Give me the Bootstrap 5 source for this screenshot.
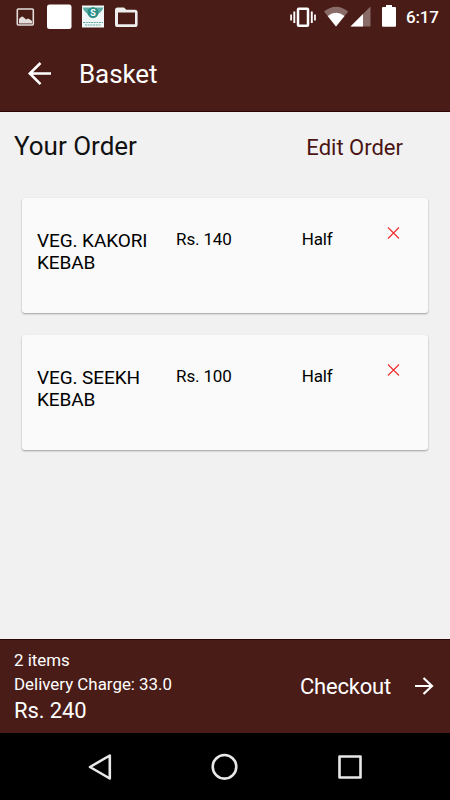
<!DOCTYPE html>
<html lang="en">
<head>
<meta charset="utf-8">
<meta name="viewport" content="width=device-width, initial-scale=1">
<title>Basket</title>
<link href="https://cdn.jsdelivr.net/npm/bootstrap@5.3.0/dist/css/bootstrap.min.css" rel="stylesheet">
<style>
  body { font-family: Roboto, "Liberation Sans", sans-serif; background: #f1f1f1; color: #111; }
  svg { display: block; flex: none; }
  .app { height: 800px; width: 450px; }
  .maroon { background: #4a1c17; color: #fff; }
  .status { height: 36px; }
  .clock { font-size: 17px; line-height: 18px; font-weight: 500; width: 34px; margin: 0 10px 0 9px; letter-spacing: -.2px; }
  .appbar { height: 76px; padding: 1px 0 0 22px; border-bottom: 1px solid #2c0505; }
  .appbar h1 { font-size: 26px; line-height: 32px; font-weight: 400; margin-left: 22px; letter-spacing: -.1px; }
  .heading { height: 86px; padding: 18px 47px 0 14px; }
  .heading h2 { font-size: 26px; line-height: 32px; font-weight: 400; }
  .edit { font-size: 22px; line-height: 36px; color: #4a1513; }
  .order { height: 115px; margin: 0 22px 22px; padding: 29px 27px 0 15px; background: #fafafa; border: 0; border-radius: 3px; box-shadow: 0 1px 2px rgba(0,0,0,.34); color: #000; }
  .dish { font-size: 19px; line-height: 22px; width: 139.500px; padding-top: 3px; letter-spacing: -.1px; }
  .cell { font-size: 17px; line-height: 25px; letter-spacing: -.15px; }
  .price { width: 126px; }
  .size { width: 83.500px; }
  .total { height: 94px; padding: 0 16px 0 14px; border-top: 1px solid #2c0505; }
  .sm-line { font-size: 16.9px; line-height: 24px; }
  .sm-line:first-child { margin-top: -1px; }
  .sum { font-size: 22px; line-height: 29px; letter-spacing: -.1px; }
  .go { font-size: 22px; line-height: 28px; letter-spacing: -.2px; }
  .keys { height: 67px; }
</style>
</head>
<body>
<div class="app d-flex flex-column overflow-hidden">
  <div class="status maroon d-flex flex-shrink-0">
    <svg width="142" height="36" viewBox="0 0 142 36">
      <g opacity=".85">
        <rect x="17.300" y="9" width="16" height="16" rx="1" fill="none" stroke="#fff" stroke-width="1.600"/>
        <path d="M19 23.500V19l2-2 1.500-.5 2 1.500 1.500 1.500 2-1 2 1 2 1.500v2.500z" fill="#fff"/>
      </g>
      <rect x="47" y="4.500" width="24.500" height="24.500" rx="2.500" fill="#fff"/>
      <rect x="82" y="5.500" width="22" height="22" fill="#f2f8f7"/>
      <path d="M82.500 7.500h7l3.500 1 3.500-1h7l-1.500 3-3 3-3 2.500-3 2.500-3-2.500-3-2.500-3-3z" fill="#5cada7"/>
      <circle cx="93" cy="12.500" r="5.500" fill="#2b8f87"/>
      <text x="93" y="15.800" font-size="9" font-weight="700" text-anchor="middle" fill="#fff">S</text>
      <path d="M83 22.500h20M85 25h16" stroke="#63aaa4" stroke-width="1.200" stroke-dasharray="2 .7"/>
      <path d="M115 10.200q0-2.700 2.600-2.700h6.400l2.300 2.300h8.700q2.600 0 2.600 2.600v12q0 2.600-2.600 2.600h-17.400q-2.600 0-2.600-2.600zM118 12.600v11.600h17V12.600z" fill="#eee" fill-rule="evenodd"/>
    </svg>
    <svg class="ms-auto" width="112" height="36" viewBox="285 0 112 36">
      <g fill="none" stroke="#fff">
        <rect x="298" y="8.700" width="10" height="17" rx=".8" stroke-width="2.500"/>
        <path d="M294.300 11.500v11.500M311.800 11.500v11.500" stroke-width="1.900"/>
        <path d="M291.100 14.500v6M315 14.500v6" stroke-width="1.700"/>
      </g>
      <path d="M324 11.500Q336 2 348.200 11.500L336 26.500z" fill="#fff" opacity=".35"/>
      <path d="M327.700 16.100Q336 9.300 344.500 16.100L336 26.500z" fill="#fff"/>
      <path d="M370.500 6.500V26.500h-20z" fill="#fff" opacity=".35"/>
      <path d="M363 14V26.500h-12.500z" fill="#fff"/>
      <path d="M386 5h6v2h3q1 0 1 1v17.700q0 1-1 1h-12q-1 0-1-1V8q0-1 1-1h3z" fill="#fff"/>
    </svg>
    <span class="clock text-nowrap pt-2">6:17</span>
  </div>

  <header class="appbar maroon d-flex align-items-center flex-shrink-0">
    <svg width="35" height="34" viewBox="22 56 35 34" fill="none" stroke="#fff" stroke-width="2.600"><path d="M51 72.500H30M40.500 62 29.800 72.500l10.700 10.700"/></svg>
    <h1 class="mb-0">Basket</h1>
  </header>

  <main class="flex-grow-1">
    <div class="heading d-flex justify-content-between align-items-start">
      <h2 class="mb-0">Your Order</h2>
      <a href="#" class="edit text-decoration-none">Edit Order</a>
    </div>
    <div class="order card flex-row align-items-start">
      <div class="dish">VEG. KAKORI KEBAB</div>
      <div class="cell price">Rs. 140</div>
      <div class="cell size">Half</div>
      <svg width="16" height="12" viewBox="0 0 16 12" stroke="#f02c2c" stroke-width="1.100"><path d="m3 .5 11 11m0-11-11 11"/></svg>
    </div>
    <div class="order card flex-row align-items-start">
      <div class="dish">VEG. SEEKH KEBAB</div>
      <div class="cell price">Rs. 100</div>
      <div class="cell size">Half</div>
      <svg width="16" height="12" viewBox="0 0 16 12" stroke="#f02c2c" stroke-width="1.100"><path d="m3 .5 11 11m0-11-11 11"/></svg>
    </div>
  </main>

  <footer class="total maroon d-flex align-items-center justify-content-between flex-shrink-0">
    <div>
      <div class="sm-line">2 items</div>
      <div class="sm-line">Delivery Charge: 33.0</div>
      <div class="sum">Rs. 240</div>
    </div>
    <div class="d-flex align-items-center">
      <span class="go">Checkout</span>
      <svg class="ms-4" width="19" height="20" viewBox="0 0 19 20" fill="none" stroke="#fff" stroke-width="2.200"><path d="M0 9h17M8.500 1l8.500 8-8.500 8"/></svg>
    </div>
  </footer>

  <nav class="keys bg-black flex-shrink-0">
    <svg width="450" height="67" viewBox="0 733 450 67" fill="none" stroke="#e8e8e8" stroke-width="2.600" stroke-linejoin="round">
      <path d="M109.800 755.500v23L90 767z"/>
      <circle cx="224.500" cy="766.800" r="11.800"/>
      <rect x="339.500" y="756.500" width="21" height="21"/>
    </svg>
  </nav>
</div>
<script src="https://cdn.jsdelivr.net/npm/bootstrap@5.3.0/dist/js/bootstrap.bundle.min.js"></script>
</body>
</html>
